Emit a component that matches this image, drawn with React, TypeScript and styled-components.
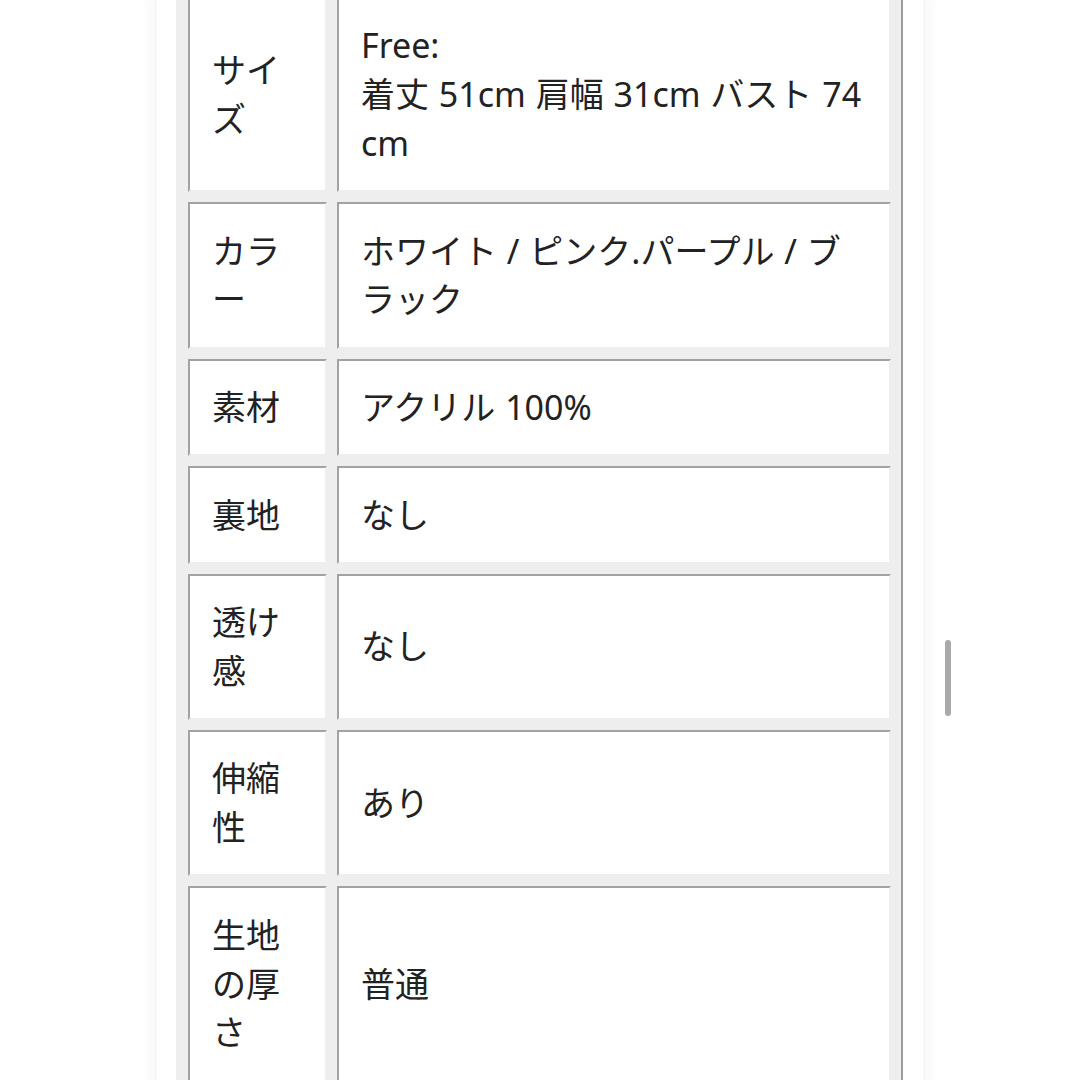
import React from "react";
import styled, { createGlobalStyle } from "styled-components";

const Global = createGlobalStyle`
  html, body {
    margin: 0;
    padding: 0;
    background: #ffffff;
    overflow: hidden;
  }
  body {
    font-family: "Noto Sans", "Noto Sans CJK JP", sans-serif;
    color: #222222;
  }
`;

const Viewport = styled.div`
  height: 100vh;
  overflow: hidden;
  background: #ffffff;
`;

const Sheet = styled.main`
  width: 766px;
  box-sizing: border-box;
  margin: -15px auto 0;
  padding: 0 19px 40px;
  min-height: 1200px;
  background: #ffffff;
  box-shadow: 0 0 18px rgba(0, 0, 0, 0.07);
`;

const SpecTable = styled.table`
  width: 727px;
  table-layout: fixed;
  border-collapse: separate;
  border-spacing: 10px;
  background: #eeeeee;
  border-style: solid;
  border-width: 2px;
  border-color: #eeeeee #9c9c9c #9c9c9c #eeeeee;
`;

const Cell = styled.td<{ $label?: boolean }>`
  box-sizing: border-box;
  width: ${(p) => (p.$label ? "139px" : "554px")};
  background: #ffffff;
  border-style: solid;
  border-width: 2px;
  border-color: #a2a2a2 #eeeeee #eeeeee #a2a2a2;
  padding: 22.4px 22px 22.4px 22px;
  font-size: 34px;
  line-height: 48.8px;
  vertical-align: middle;
  text-align: left;
  word-break: break-all;
  font-weight: 400;
  word-spacing: 1px;
`;

const Line = styled.span`
  display: block;
`;

const ScrollThumb = styled.div`
  position: fixed;
  left: 945px;
  top: 640px;
  width: 6px;
  height: 76px;
  border-radius: 3px;
  background: #a9a9a9;
`;

type Row = { label: string; value: string[] };

const rows: Row[] = [
  { label: "サイズ", value: ["Free:", "着丈 51cm 肩幅 31cm バスト 74 cm"] },
  { label: "カラー", value: ["ホワイト / ピンク.パープル / ブラック"] },
  { label: "素材", value: ["アクリル 100%"] },
  { label: "裏地", value: ["なし"] },
  { label: "透け感", value: ["なし"] },
  { label: "伸縮性", value: ["あり"] },
  { label: "生地の厚さ", value: ["普通"] },
];

export default function App() {
  return (
    <Viewport>
      <Global />
      <Sheet>
        <SpecTable>
          <tbody>
            {rows.map((r) => (
              <tr key={r.label}>
                <Cell as="th" $label>
                  {r.label}
                </Cell>
                <Cell>
                  {r.value.map((v) => (
                    <Line key={v}>{v}</Line>
                  ))}
                </Cell>
              </tr>
            ))}
          </tbody>
        </SpecTable>
      </Sheet>
      <ScrollThumb />
    </Viewport>
  );
}
